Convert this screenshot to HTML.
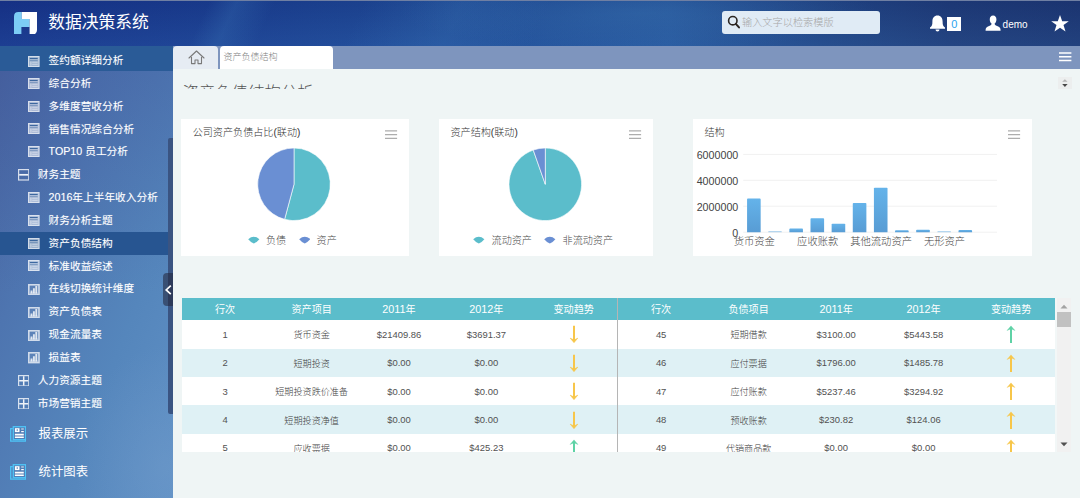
<!DOCTYPE html>
<html lang="zh-CN">
<head>
<meta charset="utf-8">
<title>数据决策系统</title>
<style>
*{box-sizing:border-box;margin:0;padding:0}
html,body{width:1080px;height:498px;overflow:hidden}
body{position:relative;font-family:"Liberation Sans","Noto Sans CJK SC",sans-serif;background:#eff5f5;color:#444}
.abs{position:absolute}
#header{position:absolute;left:0;top:0;width:1080px;height:46px;
 background:
 radial-gradient(ellipse 240px 36px at 640px 12px,rgba(60,120,180,.36),rgba(60,120,180,0) 100%),
 linear-gradient(115deg,rgba(60,120,185,0) 0,rgba(60,120,185,0) 190px,rgba(60,120,185,.28) 215px,rgba(60,120,185,0) 250px,rgba(60,120,185,0) 330px,rgba(60,120,185,.25) 420px,rgba(60,120,185,0) 500px,rgba(60,120,185,0) 100%),
 linear-gradient(180deg,rgba(10,20,90,.12) 0,rgba(70,130,200,.13) 100%),
 linear-gradient(90deg,#17348a 0%,#1a3e90 20%,#204d97 45%,#27589d 62%,#224786 76%,#1f3c78 88%,#1d3873 100%);
 border-top:1px solid #6f7fa3}
#logo{position:absolute;left:13.6px;top:10.6px;width:23px;height:22.6px}
#title{position:absolute;left:48.2px;top:9.2px;font-size:16.8px;line-height:26px;color:#fff;white-space:nowrap}
#search{position:absolute;left:722px;top:10px;width:157.6px;height:22.7px;border-radius:3px;background:#e0ebf5}
#search span{position:absolute;left:20px;top:.6px;line-height:22px;font-size:10.2px;color:#a8a8a8;font-weight:300;white-space:nowrap}
#user{position:absolute;left:1002.6px;top:16.6px;font-size:10px;line-height:14px;color:#fff}
#badge{position:absolute;left:947.4px;top:16.4px;width:13.6px;height:13.6px;background:#fff;color:#2ba3ee;font-size:11px;line-height:15px;text-align:center}

#side{position:absolute;left:0;top:46px;width:173px;height:452px;
 background:radial-gradient(ellipse 90px 120px at 165px 420px,rgba(120,160,205,.35),rgba(120,160,205,0)),linear-gradient(180deg,rgba(58,78,150,.30) 0,rgba(58,78,150,.12) 30%,rgba(58,78,150,0) 55%),linear-gradient(112deg,#48639f 0%,#4e75b0 32%,#5586bc 68%,#5f90c5 100%);overflow:hidden}
.it{position:absolute;left:0;width:173px;height:22.8px;color:#fff;font-size:10.7px;line-height:22.8px;white-space:nowrap;text-shadow:0 0 1px rgba(255,255,255,.35)}
.it.sel{background:#275591}
.it.top{background:#2a5b97;height:24.7px;line-height:29px}.it.top svg{top:9.5px}
.it span{position:absolute;left:48.6px;top:0}
.it.g span{left:37.8px}
.it svg{position:absolute;left:28.1px;top:5.9px}
.it.g svg{left:17.8px;top:6.1px}
.big{position:absolute;left:0;width:173px;height:38px;color:#fff;font-size:12.4px;line-height:38px;white-space:nowrap}
.big span{position:absolute;left:38.6px;top:.6px}
.big svg{position:absolute;left:9.8px;top:11.3px}
#sscroll{position:absolute;left:168.1px;top:91.6px;width:4.9px;height:276px;background:#3a5482;border-radius:2px 0 0 2px}
#handle{position:absolute;left:162.7px;top:227px;width:10.3px;height:33.4px;background:rgba(36,40,62,.58);border-radius:4px 0 0 4px}

#tabbar{position:absolute;left:173px;top:46px;width:907px;height:23px;background:#7e95be}
#thome{position:absolute;left:0;top:0;width:45px;height:23px;background:#e6ecf3;border-radius:4px 4px 0 0}
#tact{position:absolute;left:47px;top:0;width:113px;height:23px;background:#fff;border-radius:4px 4px 0 0;font-size:9.05px;line-height:23.2px;color:#808080;font-weight:300;padding-left:3.4px;white-space:nowrap}
#h1clip{position:absolute;left:183px;top:80px;width:200px;height:8.9px;overflow:hidden}
#h1clip div{position:absolute;left:-.4px;top:-.4px;font-size:16.4px;line-height:24px;color:#555;white-space:nowrap;font-weight:300}
.card{position:absolute;background:#fff}
.ct{position:absolute;left:11.5px;top:6.4px;font-size:10.1px;line-height:14px;color:#333;font-weight:300;white-space:nowrap}
.lg{position:absolute;font-size:10.1px;line-height:14px;color:#4a4a4a;font-weight:300;white-space:nowrap}

.ax{position:absolute;font-size:10.3px;line-height:14px;color:#444;font-weight:300;white-space:nowrap}
#tbl{position:absolute;overflow:hidden;background:#fff}
.tr{position:absolute;left:0;background:#fff;font-size:9.1px;color:#3c3c3c;font-weight:300}
.tr.alt{background:#dff1f5}
.tr.th{background:#5bbdcb;color:#fff;font-size:10.1px;font-weight:400}.tr.th .td{padding-bottom:.9px}
.td{position:absolute;top:0;height:100%;display:flex;align-items:center;justify-content:center;white-space:nowrap}
.ax.num{font-size:10.7px}
.td.n{font-size:9.45px;color:#525252}
.hn{font-size:10.8px}
</style>
</head>
<body>
<div id="header">
 <svg id="logo" viewBox="0 0 23 22.6">
  <path d="M0 4.4Q0 0 4.4 0H7.8V7H15.6V15H7.4V22.6H0Z" fill="#7ccdf5"/>
  <path d="M7.8 0H23V18Q23 22.6 18.4 22.6H15.6V7H7.8Z" fill="#fff"/>
 </svg>
 <div id="title">数据决策系统</div>
 <div id="search">
  <svg class="abs" style="left:5px;top:4.4px" width="14" height="14" viewBox="0 0 14 14"><circle cx="5.8" cy="5.7" r="4.2" fill="none" stroke="#2b2622" stroke-width="1.6"/><path d="M8.8 8.9L12 12.4" stroke="#2b2622" stroke-width="2" stroke-linecap="round"/></svg>
  <span>输入文字以检索模版</span>
 </div>
 <svg class="abs" style="left:929px;top:14px" width="17" height="18" viewBox="0 0 17 18"><path d="M8.5 0.4C5.2 0.4 3.4 2.8 3.4 6.4C3.4 9.6 3 11.4 1 12.4V13.8H16V12.4C14 11.4 13.6 9.6 13.6 6.4C13.6 2.8 11.8 0.4 8.5 0.4Z" fill="#fff"/><path d="M6.5 14.6A2 2 0 0 0 10.5 14.6Z" fill="#fff"/></svg>
 <div id="badge">0</div>
 <svg class="abs" style="left:984.8px;top:14.2px" width="16.2" height="16.2" viewBox="0 0 17 17"><path d="M8.5 0.5C6.2 0.5 5 2.3 5 4.6C5 6.6 5.8 8.3 7 9.2C6.6 10.6 5 11.4 2.6 12.4C1 13.1 0.6 14.6 0.6 16.5H16.4C16.4 14.6 16 13.1 14.4 12.4C12 11.4 10.4 10.6 10 9.2C11.2 8.3 12 6.6 12 4.6C12 2.3 10.8 0.5 8.5 0.5Z" fill="#fff"/></svg>
 <div id="user">demo</div>
 <svg class="abs" style="left:1051px;top:14px" width="18" height="17" viewBox="0 0 18 17"><path d="M9 0L11.2 6.2H17.8L12.5 10.1L14.5 16.6L9 12.7L3.5 16.6L5.5 10.1L0.2 6.2H6.8Z" fill="#fff"/></svg>
</div>

<div id="side">
<div class="it top" style="top:0.00px"><svg width="11.5" height="11" viewBox="0 0 11.5 11"><rect x="0" y="0" width="11.5" height="11" fill="#fff" opacity=".55"/><rect x=".5" y=".5" width="10.5" height="10" fill="none" stroke="#fff" stroke-width="1" opacity=".55"/><path d="M1.8 2.5H9.7" stroke="#2a5a96" stroke-width="1" opacity=".85"/><path d="M1.8 4.7H9.7" stroke="#2a5a96" stroke-width=".8" opacity=".5"/><path d="M4.2 6.2H9.7M4.2 8.3H9.7" stroke="#fff" stroke-width="1" opacity=".45"/><path d="M2.9 5.4V9.6" stroke="#fff" stroke-width="1" opacity=".5"/></svg><span>签约额详细分析</span></div>
<div class="it " style="top:25.93px"><svg width="11.5" height="11" viewBox="0 0 11.5 11"><rect x="0" y="0" width="11.5" height="11" fill="#fff" opacity=".55"/><rect x=".5" y=".5" width="10.5" height="10" fill="none" stroke="#fff" stroke-width="1" opacity=".55"/><path d="M1.8 2.5H9.7" stroke="#2a5a96" stroke-width="1" opacity=".85"/><path d="M1.8 4.7H9.7" stroke="#2a5a96" stroke-width=".8" opacity=".5"/><path d="M4.2 6.2H9.7M4.2 8.3H9.7" stroke="#fff" stroke-width="1" opacity=".45"/><path d="M2.9 5.4V9.6" stroke="#fff" stroke-width="1" opacity=".5"/></svg><span>综合分析</span></div>
<div class="it " style="top:48.76px"><svg width="11.5" height="11" viewBox="0 0 11.5 11"><rect x="0" y="0" width="11.5" height="11" fill="#fff" opacity=".55"/><rect x=".5" y=".5" width="10.5" height="10" fill="none" stroke="#fff" stroke-width="1" opacity=".55"/><path d="M1.8 2.5H9.7" stroke="#2a5a96" stroke-width="1" opacity=".85"/><path d="M1.8 4.7H9.7" stroke="#2a5a96" stroke-width=".8" opacity=".5"/><path d="M4.2 6.2H9.7M4.2 8.3H9.7" stroke="#fff" stroke-width="1" opacity=".45"/><path d="M2.9 5.4V9.6" stroke="#fff" stroke-width="1" opacity=".5"/></svg><span>多维度营收分析</span></div>
<div class="it " style="top:71.59px"><svg width="11.5" height="11" viewBox="0 0 11.5 11"><rect x="0" y="0" width="11.5" height="11" fill="#fff" opacity=".55"/><rect x=".5" y=".5" width="10.5" height="10" fill="none" stroke="#fff" stroke-width="1" opacity=".55"/><path d="M1.8 2.5H9.7" stroke="#2a5a96" stroke-width="1" opacity=".85"/><path d="M1.8 4.7H9.7" stroke="#2a5a96" stroke-width=".8" opacity=".5"/><path d="M4.2 6.2H9.7M4.2 8.3H9.7" stroke="#fff" stroke-width="1" opacity=".45"/><path d="M2.9 5.4V9.6" stroke="#fff" stroke-width="1" opacity=".5"/></svg><span>销售情况综合分析</span></div>
<div class="it " style="top:94.42px"><svg width="11.5" height="11" viewBox="0 0 11.5 11"><rect x="0" y="0" width="11.5" height="11" fill="#fff" opacity=".55"/><rect x=".5" y=".5" width="10.5" height="10" fill="none" stroke="#fff" stroke-width="1" opacity=".55"/><path d="M1.8 2.5H9.7" stroke="#2a5a96" stroke-width="1" opacity=".85"/><path d="M1.8 4.7H9.7" stroke="#2a5a96" stroke-width=".8" opacity=".5"/><path d="M4.2 6.2H9.7M4.2 8.3H9.7" stroke="#fff" stroke-width="1" opacity=".45"/><path d="M2.9 5.4V9.6" stroke="#fff" stroke-width="1" opacity=".5"/></svg><span>TOP10 员工分析</span></div>
<div class="it g" style="top:117.25px"><svg width="11.4" height="11.6" viewBox="0 0 11.4 11.6"><rect x="0.6" y="0.6" width="10.2" height="10.4" fill="none" stroke="#fff" stroke-width="1.2" opacity=".78"/><path d="M1.2 5.8H10.2" stroke="#fff" stroke-width="1.7" opacity=".92"/></svg><span>财务主题</span></div>
<div class="it " style="top:140.08px"><svg width="11.5" height="11" viewBox="0 0 11.5 11"><rect x="0" y="0" width="11.5" height="11" fill="#fff" opacity=".55"/><rect x=".5" y=".5" width="10.5" height="10" fill="none" stroke="#fff" stroke-width="1" opacity=".55"/><path d="M1.8 2.5H9.7" stroke="#2a5a96" stroke-width="1" opacity=".85"/><path d="M1.8 4.7H9.7" stroke="#2a5a96" stroke-width=".8" opacity=".5"/><path d="M4.2 6.2H9.7M4.2 8.3H9.7" stroke="#fff" stroke-width="1" opacity=".45"/><path d="M2.9 5.4V9.6" stroke="#fff" stroke-width="1" opacity=".5"/></svg><span>2016年上半年收入分析</span></div>
<div class="it " style="top:162.91px"><svg width="11.5" height="11" viewBox="0 0 11.5 11"><rect x="0" y="0" width="11.5" height="11" fill="#fff" opacity=".55"/><rect x=".5" y=".5" width="10.5" height="10" fill="none" stroke="#fff" stroke-width="1" opacity=".55"/><path d="M1.8 2.5H9.7" stroke="#2a5a96" stroke-width="1" opacity=".85"/><path d="M1.8 4.7H9.7" stroke="#2a5a96" stroke-width=".8" opacity=".5"/><path d="M4.2 6.2H9.7M4.2 8.3H9.7" stroke="#fff" stroke-width="1" opacity=".45"/><path d="M2.9 5.4V9.6" stroke="#fff" stroke-width="1" opacity=".5"/></svg><span>财务分析主题</span></div>
<div class="it sel" style="top:185.74px"><svg width="11.5" height="11" viewBox="0 0 11.5 11"><rect x="0" y="0" width="11.5" height="11" fill="#fff" opacity=".55"/><rect x=".5" y=".5" width="10.5" height="10" fill="none" stroke="#fff" stroke-width="1" opacity=".55"/><path d="M1.8 2.5H9.7" stroke="#2a5a96" stroke-width="1" opacity=".85"/><path d="M1.8 4.7H9.7" stroke="#2a5a96" stroke-width=".8" opacity=".5"/><path d="M4.2 6.2H9.7M4.2 8.3H9.7" stroke="#fff" stroke-width="1" opacity=".45"/><path d="M2.9 5.4V9.6" stroke="#fff" stroke-width="1" opacity=".5"/></svg><span>资产负债结构</span></div>
<div class="it " style="top:208.57px"><svg width="11.5" height="11" viewBox="0 0 11.5 11"><rect x="0" y="0" width="11.5" height="11" fill="#fff" opacity=".55"/><rect x=".5" y=".5" width="10.5" height="10" fill="none" stroke="#fff" stroke-width="1" opacity=".55"/><path d="M1.8 2.5H9.7" stroke="#2a5a96" stroke-width="1" opacity=".85"/><path d="M1.8 4.7H9.7" stroke="#2a5a96" stroke-width=".8" opacity=".5"/><path d="M4.2 6.2H9.7M4.2 8.3H9.7" stroke="#fff" stroke-width="1" opacity=".45"/><path d="M2.9 5.4V9.6" stroke="#fff" stroke-width="1" opacity=".5"/></svg><span>标准收益综述</span></div>
<div class="it " style="top:231.40px"><svg style="margin-top:.6px" width="11.8" height="11.4" viewBox="0 0 11.8 11.4"><rect x="0.8" y="0.8" width="10.2" height="9.8" fill="#fff" fill-opacity=".1" stroke="#fff" stroke-width="1.6" opacity=".74"/><path d="M3.5 9.6V6.4M5.9 9.6V4.2M8.3 9.6V2" stroke="#fff" stroke-width="1.9" opacity=".8"/><path d="M2 9.2H9.8" stroke="#fff" stroke-width="1.4" opacity=".45"/></svg><span>在线切换统计维度</span></div>
<div class="it " style="top:254.23px"><svg style="margin-top:.6px" width="11.8" height="11.4" viewBox="0 0 11.8 11.4"><rect x="0.8" y="0.8" width="10.2" height="9.8" fill="#fff" fill-opacity=".1" stroke="#fff" stroke-width="1.6" opacity=".74"/><path d="M3.5 9.6V6.4M5.9 9.6V4.2M8.3 9.6V2" stroke="#fff" stroke-width="1.9" opacity=".8"/><path d="M2 9.2H9.8" stroke="#fff" stroke-width="1.4" opacity=".45"/></svg><span>资产负债表</span></div>
<div class="it " style="top:277.06px"><svg style="margin-top:.6px" width="11.8" height="11.4" viewBox="0 0 11.8 11.4"><rect x="0.8" y="0.8" width="10.2" height="9.8" fill="#fff" fill-opacity=".1" stroke="#fff" stroke-width="1.6" opacity=".74"/><path d="M3.5 9.6V6.4M5.9 9.6V4.2M8.3 9.6V2" stroke="#fff" stroke-width="1.9" opacity=".8"/><path d="M2 9.2H9.8" stroke="#fff" stroke-width="1.4" opacity=".45"/></svg><span>现金流量表</span></div>
<div class="it " style="top:299.89px"><svg style="margin-top:.6px" width="11.8" height="11.4" viewBox="0 0 11.8 11.4"><rect x="0.8" y="0.8" width="10.2" height="9.8" fill="#fff" fill-opacity=".1" stroke="#fff" stroke-width="1.6" opacity=".74"/><path d="M3.5 9.6V6.4M5.9 9.6V4.2M8.3 9.6V2" stroke="#fff" stroke-width="1.9" opacity=".8"/><path d="M2 9.2H9.8" stroke="#fff" stroke-width="1.4" opacity=".45"/></svg><span>损益表</span></div>
<div class="it g" style="top:322.72px"><svg width="11.4" height="11.6" viewBox="0 0 11.4 11.6"><rect x="0.6" y="0.6" width="10.2" height="10.4" fill="none" stroke="#fff" stroke-width="1.2" opacity=".78"/><path d="M1.2 5.8H10.2M5.7 1.2V10.4" stroke="#fff" stroke-width="1.5" opacity=".9"/></svg><span>人力资源主题</span></div>
<div class="it g" style="top:345.55px"><svg width="11.4" height="11.6" viewBox="0 0 11.4 11.6"><rect x="0.6" y="0.6" width="10.2" height="10.4" fill="none" stroke="#fff" stroke-width="1.2" opacity=".78"/><path d="M1.2 5.8H10.2M5.7 1.2V10.4" stroke="#fff" stroke-width="1.5" opacity=".9"/></svg><span>市场营销主题</span></div>
<div class="big" style="top:368.40px"><svg width="16.4" height="16" viewBox="0 0 16.4 16"><path d="M2.8 2.6H0.7V15.2H15.6V13.8" fill="none" stroke="#4fc4f6" stroke-width="1.3"/><rect x="3.3" y="0.7" width="12.3" height="13" fill="none" stroke="#4fc4f6" stroke-width="1.3"/><rect x="4.9" y="2.2" width="4.6" height="3.9" fill="#fff"/><rect x="6.6" y="3.4" width="1.4" height="1.3" fill="#5b84bd"/><path d="M11.2 3H13.8" stroke="#fff" stroke-width="1.3" opacity=".7"/><path d="M11.2 5.6H13.8" stroke="#fff" stroke-width="1.2"/><path d="M4.9 8.6H13.8M4.9 11.2H13.8" stroke="#fff" stroke-width="1.6"/></svg><span>报表展示</span></div>
<div class="big" style="top:406.30px"><svg width="16.4" height="16" viewBox="0 0 16.4 16"><path d="M2.8 2.6H0.7V15.2H15.6V13.8" fill="none" stroke="#4fc4f6" stroke-width="1.3"/><rect x="3.3" y="0.7" width="12.3" height="13" fill="none" stroke="#4fc4f6" stroke-width="1.3"/><rect x="4.9" y="2.2" width="4.6" height="3.9" fill="#fff"/><rect x="6.6" y="3.4" width="1.4" height="1.3" fill="#5b84bd"/><path d="M11.2 3H13.8" stroke="#fff" stroke-width="1.3" opacity=".7"/><path d="M11.2 5.6H13.8" stroke="#fff" stroke-width="1.2"/><path d="M4.9 8.6H13.8M4.9 11.2H13.8" stroke="#fff" stroke-width="1.6"/></svg><span>统计图表</span></div>
<div id="sscroll"></div><div id="handle"><svg style="position:absolute;left:0;top:0" width="10.3" height="33.4" viewBox="0 0 10.3 33.4"><path d="M7.8 12.6L3.2 16.9L7.8 21.2" fill="none" stroke="#fff" stroke-width="1.7"/></svg></div>
</div>
<div id="tabbar">
 <div id="thome"><svg class="abs" style="left:15.1px;top:3.9px" width="17" height="15" viewBox="0 0 17 15"><path d="M1 8L8.5 1L16 8M3.5 7.2V13.6H7V10H10V13.6H13.5V7.2" fill="none" stroke="#7a7a7a" stroke-width="1.1" stroke-linejoin="round" stroke-linecap="round"/></svg></div>
 <div id="tact">资产负债结构</div>
 <svg class="abs" style="left:885.7px;top:5.9px" width="13" height="11" viewBox="0 0 13 11"><path d="M0 1H12.4M0 4.8H12.4M0 8.5H12.4" stroke="#fff" stroke-width="1.5"/></svg>
</div>
<div id="h1clip"><div>资产负债结构分析</div></div>
<div class="card" style="left:181.2px;top:119.3px;width:227.4px;height:137.2px">
<div class="ct">公司资产负债占比(联动)</div>
<svg class="abs" style="left:203.4px;top:10.9px" width="13" height="10" viewBox="0 0 13 10"><path d="M0 .8H12.1M0 4.6H12.1M0 8.4H12.1" stroke="#adadad" stroke-width="1.3"/></svg>
<svg class="abs" style="left:0;top:0" width="227.4" height="137.2"><path d="M113.00 65.30L113.00 29.00A36.3 36.3 0 1 1 103.60 100.36Z" fill="#5bbdcb" stroke="#fff" stroke-width=".6" stroke-linejoin="round"/><path d="M113.00 65.30L103.60 100.36A36.3 36.3 0 0 1 113.00 29.00Z" fill="#6a8fd3" stroke="#fff" stroke-width=".6" stroke-linejoin="round"/></svg>
<svg class="abs" style="left:66.8px;top:116.9px" width="11.6" height="7.8" viewBox="0 0 12 8"><path d="M0.2 3.2Q6 -1.6 11.8 3.2Q9 6.6 6 7.6Q3 6.6 0.2 3.2Z" fill="#5bbdcb"/></svg>
<div class="lg" style="left:84.7px;top:114.7px">负债</div>
<svg class="abs" style="left:117.4px;top:116.9px" width="11.6" height="7.8" viewBox="0 0 12 8"><path d="M0.2 3.2Q6 -1.6 11.8 3.2Q9 6.6 6 7.6Q3 6.6 0.2 3.2Z" fill="#6a8fd3"/></svg>
<div class="lg" style="left:135.4px;top:114.7px">资产</div>
</div>
<div class="card" style="left:439px;top:119.3px;width:213.8px;height:137.2px">
<div class="ct">资产结构(联动)</div>
<svg class="abs" style="left:190.0px;top:10.9px" width="13" height="10" viewBox="0 0 13 10"><path d="M0 .8H12.1M0 4.6H12.1M0 8.4H12.1" stroke="#adadad" stroke-width="1.3"/></svg>
<svg class="abs" style="left:0;top:0" width="213.8" height="137.2"><path d="M106.30 65.30L106.30 29.00A36.3 36.3 0 1 1 94.24 31.06Z" fill="#5bbdcb" stroke="#fff" stroke-width=".6" stroke-linejoin="round"/><path d="M106.30 65.30L94.24 31.06A36.3 36.3 0 0 1 106.30 29.00Z" fill="#6a8fd3" stroke="#fff" stroke-width=".6" stroke-linejoin="round"/></svg>
<svg class="abs" style="left:34.4px;top:116.9px" width="11.6" height="7.8" viewBox="0 0 12 8"><path d="M0.2 3.2Q6 -1.6 11.8 3.2Q9 6.6 6 7.6Q3 6.6 0.2 3.2Z" fill="#5bbdcb"/></svg>
<div class="lg" style="left:52.6px;top:114.7px">流动资产</div>
<svg class="abs" style="left:105.4px;top:116.9px" width="11.6" height="7.8" viewBox="0 0 12 8"><path d="M0.2 3.2Q6 -1.6 11.8 3.2Q9 6.6 6 7.6Q3 6.6 0.2 3.2Z" fill="#6a8fd3"/></svg>
<div class="lg" style="left:123.6px;top:114.7px">非流动资产</div>
</div>
<div class="card" style="left:692.6px;top:119.3px;width:339.6px;height:137.2px">
<div class="ct" style="left:11.8px">结构</div>
<svg class="abs" style="left:315.8px;top:10.9px" width="13" height="10" viewBox="0 0 13 10"><path d="M0 .8H12.1M0 4.6H12.1M0 8.4H12.1" stroke="#adadad" stroke-width="1.3"/></svg>
<svg class="abs" style="left:0;top:0" width="339.6" height="137.2"><defs><linearGradient id="bg" x1="0" y1="0" x2="0" y2="1"><stop offset="0" stop-color="#64b3ea"/><stop offset="1" stop-color="#589cd4"/></linearGradient></defs><path d="M50.2 35.4H304.0" stroke="#f1f1f1" stroke-width="1"/><path d="M50.2 61.3H304.0" stroke="#f1f1f1" stroke-width="1"/><path d="M50.2 87.2H304.0" stroke="#f1f1f1" stroke-width="1"/><path d="M50.2 113.2H304.0" stroke="#f1f1f1" stroke-width="1"/><path d="M54.07 113.20V80.40Q54.07 79.60 54.87 79.60H66.87Q67.67 79.60 67.67 80.40V113.20Z" fill="url(#bg)"/><path d="M75.21 113.20V112.80Q75.21 112.00 76.01 112.00H88.01Q88.81 112.00 88.81 112.80V113.20Z" fill="url(#bg)" opacity=".45"/><path d="M96.35 113.20V110.40Q96.35 109.60 97.15 109.60H109.15Q109.95 109.60 109.95 110.40V113.20Z" fill="url(#bg)"/><path d="M117.50 113.20V100.00Q117.50 99.20 118.30 99.20H130.30Q131.10 99.20 131.10 100.00V113.20Z" fill="url(#bg)"/><path d="M138.64 113.20V105.60Q138.64 104.80 139.44 104.80H151.44Q152.24 104.80 152.24 105.60V113.20Z" fill="url(#bg)"/><path d="M159.78 113.20V84.80Q159.78 84.00 160.58 84.00H172.58Q173.38 84.00 173.38 84.80V113.20Z" fill="url(#bg)"/><path d="M180.92 113.20V69.60Q180.92 68.80 181.72 68.80H193.72Q194.52 68.80 194.52 69.60V113.20Z" fill="url(#bg)"/><path d="M202.06 113.20V112.00Q202.06 111.20 202.86 111.20H214.86Q215.66 111.20 215.66 112.00V113.20Z" fill="url(#bg)"/><path d="M223.20 113.20V111.60Q223.20 110.80 224.00 110.80H236.00Q236.80 110.80 236.80 111.60V113.20Z" fill="url(#bg)"/><path d="M244.35 113.20V112.80Q244.35 112.00 245.15 112.00H257.15Q257.95 112.00 257.95 112.80V113.20Z" fill="url(#bg)" opacity=".45"/><path d="M265.49 113.20V111.90Q265.49 111.10 266.29 111.10H278.29Q279.09 111.10 279.09 111.90V113.20Z" fill="url(#bg)"/></svg>
<div class="ax num" style="left:0;width:45.7px;top:28.6px;text-align:right">6000000</div>
<div class="ax num" style="left:0;width:45.7px;top:54.5px;text-align:right">4000000</div>
<div class="ax num" style="left:0;width:45.7px;top:80.4px;text-align:right">2000000</div>
<div class="ax num" style="left:0;width:45.7px;top:106.4px;text-align:right">0</div>
<div class="ax" style="left:11.7px;width:100px;top:115.6px;text-align:center">货币资金</div>
<div class="ax" style="left:75.1px;width:100px;top:115.6px;text-align:center">应收账款</div>
<div class="ax" style="left:138.5px;width:100px;top:115.6px;text-align:center">其他流动资产</div>
<div class="ax" style="left:201.9px;width:100px;top:115.6px;text-align:center">无形资产</div>
</div>
<div id="tbl" style="left:182.2px;top:297.8px;width:889.0px;height:153.8px">
<div class="tr th" style="top:0;height:22.5px;width:872.7px"><div class="td" style="left:0.00px;width:85.80px">行次</div><div class="td" style="left:85.80px;width:87.35px">资产项目</div><div class="td" style="left:173.15px;width:87.35px"><span class="hn">2011</span>年</div><div class="td" style="left:260.50px;width:87.35px"><span class="hn">2012</span>年</div><div class="td" style="left:347.85px;width:87.35px">变动趋势</div><div class="td" style="left:435.20px;width:87.50px">行次</div><div class="td" style="left:522.70px;width:87.50px">负债项目</div><div class="td" style="left:610.20px;width:87.50px"><span class="hn">2011</span>年</div><div class="td" style="left:697.70px;width:87.50px"><span class="hn">2012</span>年</div><div class="td" style="left:785.20px;width:87.50px">变动趋势</div></div>
<div class="tr" style="top:22.50px;height:28.35px;width:872.7px"><div class="td n" style="left:0.00px;width:85.80px">1</div><div class="td" style="left:85.80px;width:87.35px">货币资金</div><div class="td n" style="left:173.15px;width:87.35px">$21409.86</div><div class="td n" style="left:260.50px;width:87.35px">$3691.37</div><div class="td ar" style="left:347.85px;width:87.35px"><svg width="10" height="18" viewBox="0 0 10 18"><path d="M5 0.7V15.5" fill="none" stroke="#f7c64a" stroke-width="2"/><path d="M5 17.7L1.1 13.1Q3.3 14.4 5 14.7Q6.7 14.4 8.9 13.1Z" fill="#f7c64a" stroke="#f7c64a" stroke-width=".5" stroke-linejoin="round"/></svg></div><div class="td n" style="left:435.20px;width:87.50px">45</div><div class="td" style="left:522.70px;width:87.50px">短期借款</div><div class="td n" style="left:610.20px;width:87.50px">$3100.00</div><div class="td n" style="left:697.70px;width:87.50px">$5443.58</div><div class="td ar" style="left:785.20px;width:87.50px"><svg width="10" height="18" viewBox="0 0 10 18"><path d="M5 18V3" fill="none" stroke="#5fd2a6" stroke-width="2"/><path d="M5 0.9L1.2 5.4Q3.3 4.2 5 3.9Q6.7 4.2 8.8 5.4Z" fill="#5fd2a6" stroke="#5fd2a6" stroke-width=".5" stroke-linejoin="round"/></svg></div></div>
<div class="tr alt" style="top:50.85px;height:28.35px;width:872.7px"><div class="td n" style="left:0.00px;width:85.80px">2</div><div class="td" style="left:85.80px;width:87.35px">短期投资</div><div class="td n" style="left:173.15px;width:87.35px">$0.00</div><div class="td n" style="left:260.50px;width:87.35px">$0.00</div><div class="td ar" style="left:347.85px;width:87.35px"><svg width="10" height="18" viewBox="0 0 10 18"><path d="M5 0.7V15.5" fill="none" stroke="#f7c64a" stroke-width="2"/><path d="M5 17.7L1.1 13.1Q3.3 14.4 5 14.7Q6.7 14.4 8.9 13.1Z" fill="#f7c64a" stroke="#f7c64a" stroke-width=".5" stroke-linejoin="round"/></svg></div><div class="td n" style="left:435.20px;width:87.50px">46</div><div class="td" style="left:522.70px;width:87.50px">应付票据</div><div class="td n" style="left:610.20px;width:87.50px">$1796.00</div><div class="td n" style="left:697.70px;width:87.50px">$1485.78</div><div class="td ar" style="left:785.20px;width:87.50px"><svg width="10" height="18" viewBox="0 0 10 18"><path d="M5 18V3" fill="none" stroke="#f7c64a" stroke-width="2"/><path d="M5 0.9L1.2 5.4Q3.3 4.2 5 3.9Q6.7 4.2 8.8 5.4Z" fill="#f7c64a" stroke="#f7c64a" stroke-width=".5" stroke-linejoin="round"/></svg></div></div>
<div class="tr" style="top:79.20px;height:28.35px;width:872.7px"><div class="td n" style="left:0.00px;width:85.80px">3</div><div class="td" style="left:85.80px;width:87.35px">短期投资跌价准备</div><div class="td n" style="left:173.15px;width:87.35px">$0.00</div><div class="td n" style="left:260.50px;width:87.35px">$0.00</div><div class="td ar" style="left:347.85px;width:87.35px"><svg width="10" height="18" viewBox="0 0 10 18"><path d="M5 0.7V15.5" fill="none" stroke="#f7c64a" stroke-width="2"/><path d="M5 17.7L1.1 13.1Q3.3 14.4 5 14.7Q6.7 14.4 8.9 13.1Z" fill="#f7c64a" stroke="#f7c64a" stroke-width=".5" stroke-linejoin="round"/></svg></div><div class="td n" style="left:435.20px;width:87.50px">47</div><div class="td" style="left:522.70px;width:87.50px">应付账款</div><div class="td n" style="left:610.20px;width:87.50px">$5237.46</div><div class="td n" style="left:697.70px;width:87.50px">$3294.92</div><div class="td ar" style="left:785.20px;width:87.50px"><svg width="10" height="18" viewBox="0 0 10 18"><path d="M5 18V3" fill="none" stroke="#f7c64a" stroke-width="2"/><path d="M5 0.9L1.2 5.4Q3.3 4.2 5 3.9Q6.7 4.2 8.8 5.4Z" fill="#f7c64a" stroke="#f7c64a" stroke-width=".5" stroke-linejoin="round"/></svg></div></div>
<div class="tr alt" style="top:107.55px;height:28.35px;width:872.7px"><div class="td n" style="left:0.00px;width:85.80px">4</div><div class="td" style="left:85.80px;width:87.35px">短期投资净值</div><div class="td n" style="left:173.15px;width:87.35px">$0.00</div><div class="td n" style="left:260.50px;width:87.35px">$0.00</div><div class="td ar" style="left:347.85px;width:87.35px"><svg width="10" height="18" viewBox="0 0 10 18"><path d="M5 0.7V15.5" fill="none" stroke="#f7c64a" stroke-width="2"/><path d="M5 17.7L1.1 13.1Q3.3 14.4 5 14.7Q6.7 14.4 8.9 13.1Z" fill="#f7c64a" stroke="#f7c64a" stroke-width=".5" stroke-linejoin="round"/></svg></div><div class="td n" style="left:435.20px;width:87.50px">48</div><div class="td" style="left:522.70px;width:87.50px">预收账款</div><div class="td n" style="left:610.20px;width:87.50px">$230.82</div><div class="td n" style="left:697.70px;width:87.50px">$124.06</div><div class="td ar" style="left:785.20px;width:87.50px"><svg width="10" height="18" viewBox="0 0 10 18"><path d="M5 18V3" fill="none" stroke="#f7c64a" stroke-width="2"/><path d="M5 0.9L1.2 5.4Q3.3 4.2 5 3.9Q6.7 4.2 8.8 5.4Z" fill="#f7c64a" stroke="#f7c64a" stroke-width=".5" stroke-linejoin="round"/></svg></div></div>
<div class="tr" style="top:135.90px;height:28.35px;width:872.7px"><div class="td n" style="left:0.00px;width:85.80px">5</div><div class="td" style="left:85.80px;width:87.35px">应收票据</div><div class="td n" style="left:173.15px;width:87.35px">$0.00</div><div class="td n" style="left:260.50px;width:87.35px">$425.23</div><div class="td ar" style="left:347.85px;width:87.35px"><svg width="10" height="18" viewBox="0 0 10 18"><path d="M5 18V3" fill="none" stroke="#5fd2a6" stroke-width="2"/><path d="M5 0.9L1.2 5.4Q3.3 4.2 5 3.9Q6.7 4.2 8.8 5.4Z" fill="#5fd2a6" stroke="#5fd2a6" stroke-width=".5" stroke-linejoin="round"/></svg></div><div class="td n" style="left:435.20px;width:87.50px">49</div><div class="td" style="left:522.70px;width:87.50px">代销商品款</div><div class="td n" style="left:610.20px;width:87.50px">$0.00</div><div class="td n" style="left:697.70px;width:87.50px">$0.00</div><div class="td ar" style="left:785.20px;width:87.50px"><svg width="10" height="18" viewBox="0 0 10 18"><path d="M5 18V3" fill="none" stroke="#f7c64a" stroke-width="2"/><path d="M5 0.9L1.2 5.4Q3.3 4.2 5 3.9Q6.7 4.2 8.8 5.4Z" fill="#f7c64a" stroke="#f7c64a" stroke-width=".5" stroke-linejoin="round"/></svg></div></div>
<div class="abs" style="left:434.6px;top:0;width:1.2px;height:100%;background:#b5b5b5"></div>
<div class="abs" style="left:872.7px;top:0;width:2.1px;height:100%;background:#f2f7f7"></div>
<div class="abs" style="left:874.8px;top:0;width:14.2px;height:100%;background:#f1f1f1"><svg class="abs" style="left:3px;top:6px" width="8" height="5" viewBox="0 0 8 5"><path d="M0.5 4.5L4 0.8L7.5 4.5Z" fill="#a3a3a3"/></svg><div class="abs" style="left:.3px;top:14.6px;width:13.4px;height:14.6px;background:#c1c1c1"></div><svg class="abs" style="left:3px;top:143.8px" width="8" height="5" viewBox="0 0 8 5"><path d="M0.5 0.5L4 4.2L7.5 0.5Z" fill="#505050"/></svg></div>
</div>
<div class="abs" style="left:1057.5px;top:76.9px;width:14.4px;height:12px;background:#eceeee"><svg class="abs" style="left:4.2px;top:2.2px" width="6" height="9" viewBox="0 0 6 9"><path d="M0.2 2.8L2.9 0.2L5.6 2.8Z" fill="#b4b4b4"/><path d="M0.2 4.9L2.9 8L5.6 4.9Z" fill="#484848"/></svg></div>
</body>
</html>
